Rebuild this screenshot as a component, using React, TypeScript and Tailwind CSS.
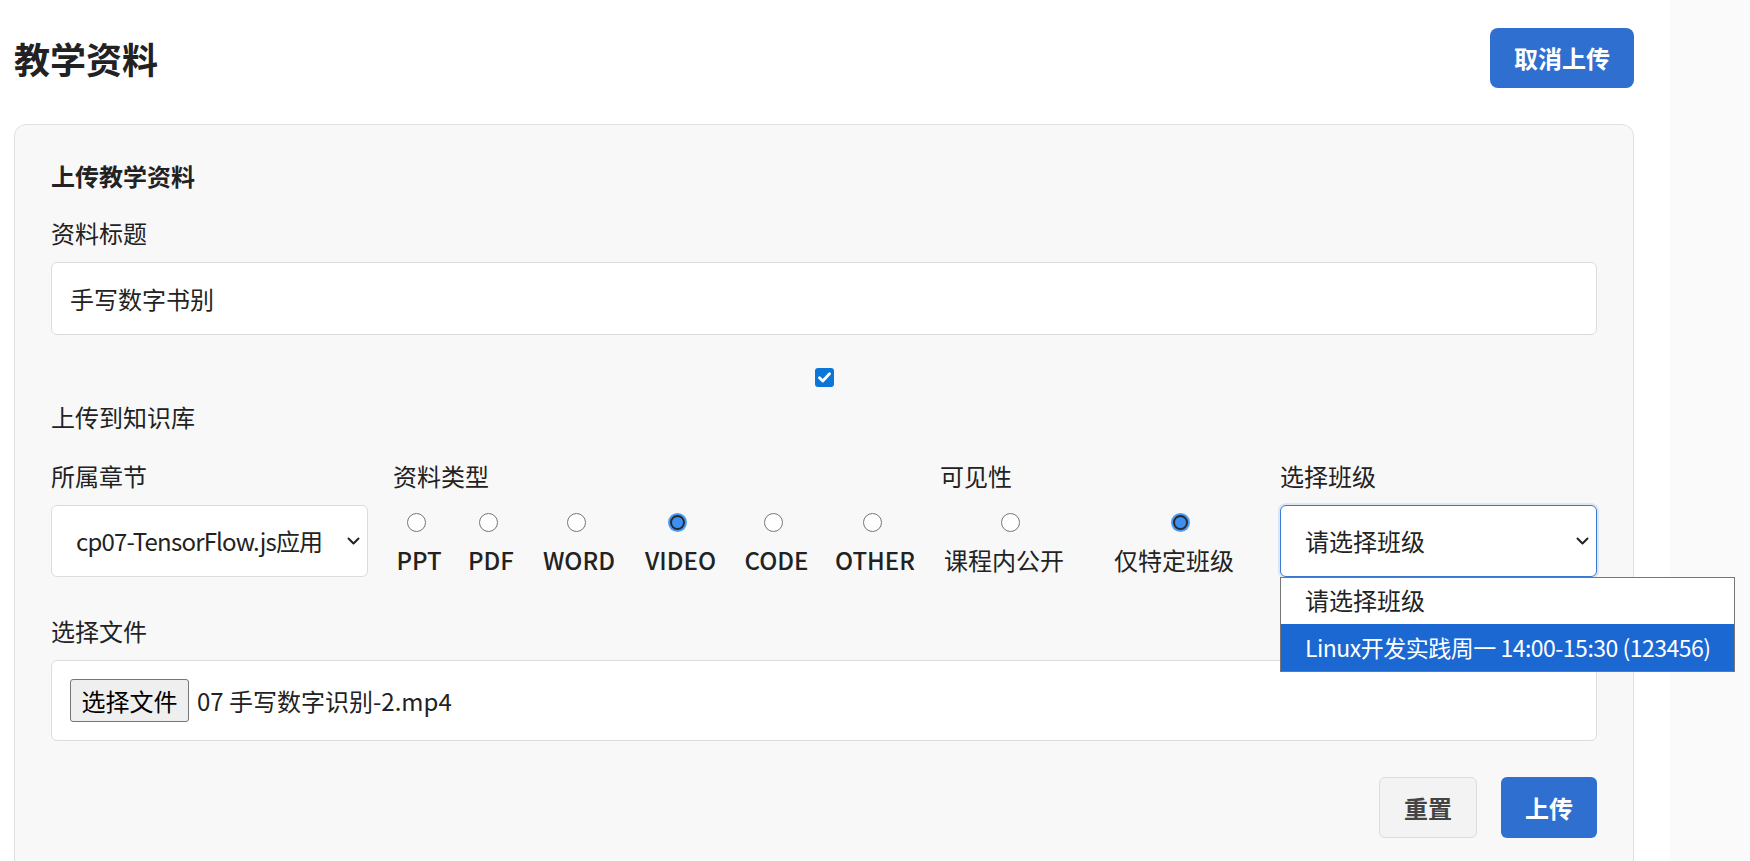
import React from "react";

const Chevron = () => (
  <svg width="13" height="8" viewBox="0 0 13 8" fill="none">
    <path d="M1.5 1.5 L6.5 6.5 L11.5 1.5" stroke="#222" strokeWidth="2" strokeLinecap="round" strokeLinejoin="round" />
  </svg>
);

const Radio = ({ checked, shift }: { checked?: boolean; shift: string }) =>
  checked ? (
    <span className={`flex h-[19px] w-[19px] items-center justify-center rounded-full bg-[#4a9bf5] ${shift}`}>
      <span className="h-[15px] w-[15px] rounded-full border-[2.5px] border-[#2b2b2b] bg-[#3d8ff2]" />
    </span>
  ) : (
    <span className={`h-[19px] w-[19px] rounded-full border-[1.5px] border-[#767676] bg-white ${shift}`} />
  );

const types = [
  { label: "PPT", w: "w-[40px]" },
  { label: "PDF", w: "w-[42px]" },
  { label: "WORD", w: "w-[72px]" },
  { label: "VIDEO", w: "w-[69px]", checked: true },
  { label: "CODE", w: "w-[61px]" },
  { label: "OTHER", w: "w-[74px]" },
];

const App = () => {
  return (
    <div className="flex min-h-screen bg-white text-[#222] font-['Noto_Sans_CJK_SC','Noto_Sans',sans-serif]">
      <main className="flex-1 pl-[14px] pr-[36px]">
        <div className="flex items-center justify-between pt-[28px]">
          <h1 className="text-[36px] font-bold leading-[60px]">教学资料</h1>
          <button className="h-[60px] w-[144px] rounded-[8px] bg-[#2e6fd0] text-[24px] font-bold text-white">
            取消上传
          </button>
        </div>

        <div className="mt-[36px] rounded-[12px] border border-[#e0e0e0] bg-[#f8f8f8] px-[36px] pb-[36px] pt-[33px]">
          <h2 className="text-[24px] font-bold leading-[36px]">上传教学资料</h2>

          <div className="mt-[21px] text-[24px] leading-[36px]">资料标题</div>
          <div className="mt-[11px] flex h-[73px] items-center rounded-[6px] border border-[#dcdcdc] bg-white px-[18px] text-[24px]">
            手写数字书别
          </div>

          <div className="mt-[33px] flex justify-center">
            <span className="flex h-[19px] w-[19px] items-center justify-center rounded-[3px] bg-[#0b76d9]">
              <svg width="13" height="11" viewBox="0 0 13 11" fill="none">
                <path d="M1.5 5.8 L4.8 9 L11.5 1.8" stroke="white" strokeWidth="2.8" strokeLinecap="round" strokeLinejoin="round" />
              </svg>
            </span>
          </div>
          <div className="mt-[12px] text-[24px] leading-[36px]">上传到知识库</div>

          <div className="mt-[23px] grid grid-cols-[317px_522px_315px_317px] gap-x-[25px] text-[24px]">
            <div>
              <div className="leading-[36px]">所属章节</div>
              <div className="mt-[11px] flex h-[72px] items-center rounded-[6px] border border-[#dcdcdc] bg-white pl-[24px] pr-[7px]">
                <span className="whitespace-nowrap tracking-[-0.8px]">cp07-TensorFlow.js应用</span>
                <span className="ml-auto">
                  <Chevron />
                </span>
              </div>
            </div>

            <div>
              <div className="leading-[36px]">资料类型</div>
              <div className="ml-[6px] mt-[19px] flex gap-x-[31px]">
                {types.map((t) => (
                  <div key={t.label} className={`flex flex-col items-center ${t.w}`}>
                    <Radio checked={t.checked} shift="mr-[6px]" />
                    <span className="mt-[10px] whitespace-nowrap font-medium leading-[36px]">{t.label}</span>
                  </div>
                ))}
              </div>
            </div>

            <div>
              <div className="leading-[36px]">可见性</div>
              <div className="ml-[5px] mt-[19px] flex gap-x-[51px]">
                <div className="flex w-[118px] flex-col items-center">
                  <Radio shift="ml-[12px]" />
                  <span className="mt-[10px] whitespace-nowrap leading-[36px]">课程内公开</span>
                </div>
                <div className="flex w-[120px] flex-col items-center">
                  <Radio checked shift="ml-[12px]" />
                  <span className="mt-[10px] whitespace-nowrap leading-[36px]">仅特定班级</span>
                </div>
              </div>
            </div>

            <div>
              <div className="leading-[36px]">选择班级</div>
              <div className="relative mt-[11px]">
                <div className="flex h-[72px] items-center rounded-[6px] border border-[#3a78d4] bg-white pl-[24px] pr-[7px] shadow-[0_0_0_2px_#dde6f4]">
                  <span>请选择班级</span>
                  <span className="ml-auto">
                    <Chevron />
                  </span>
                </div>
                <div className="absolute left-0 top-[72px] z-10 w-[455px] border border-[#767676] bg-white">
                  <div className="flex h-[46px] items-center whitespace-nowrap pb-[3px] pl-[24px]">请选择班级</div>
                  <div className="flex h-[47px] items-center whitespace-nowrap bg-[#1b68d3] pl-[24px] text-[23px] tracking-[-0.5px] text-white">
                    Linux开发实践周一 14:00-15:30 (123456)
                  </div>
                </div>
              </div>
            </div>
          </div>

          <div className="mt-[35px] text-[24px] leading-[36px]">选择文件</div>
          <div className="mt-[11px] flex h-[81px] items-center rounded-[6px] border border-[#dcdcdc] bg-white px-[18px] text-[24px]">
            <span className="flex h-[43px] w-[119px] items-center justify-center rounded-[3px] border border-[#767676] bg-[#efefef] text-black">
              选择文件
            </span>
            <span className="ml-[8px]">07 手写数字识别-2.mp4</span>
          </div>

          <div className="mt-[36px] flex justify-end gap-x-[24px]">
            <button className="h-[61px] w-[98px] rounded-[6px] border border-[#dcdcdc] bg-[#f3f3f3] text-[24px] font-bold text-[#444]">
              重置
            </button>
            <button className="h-[61px] w-[96px] rounded-[6px] bg-[#2e6fd0] text-[24px] font-bold text-white">
              上传
            </button>
          </div>
        </div>
      </main>
      <aside className="w-[80px] bg-[#fafafa]" />
    </div>
  );
};

export default App;
